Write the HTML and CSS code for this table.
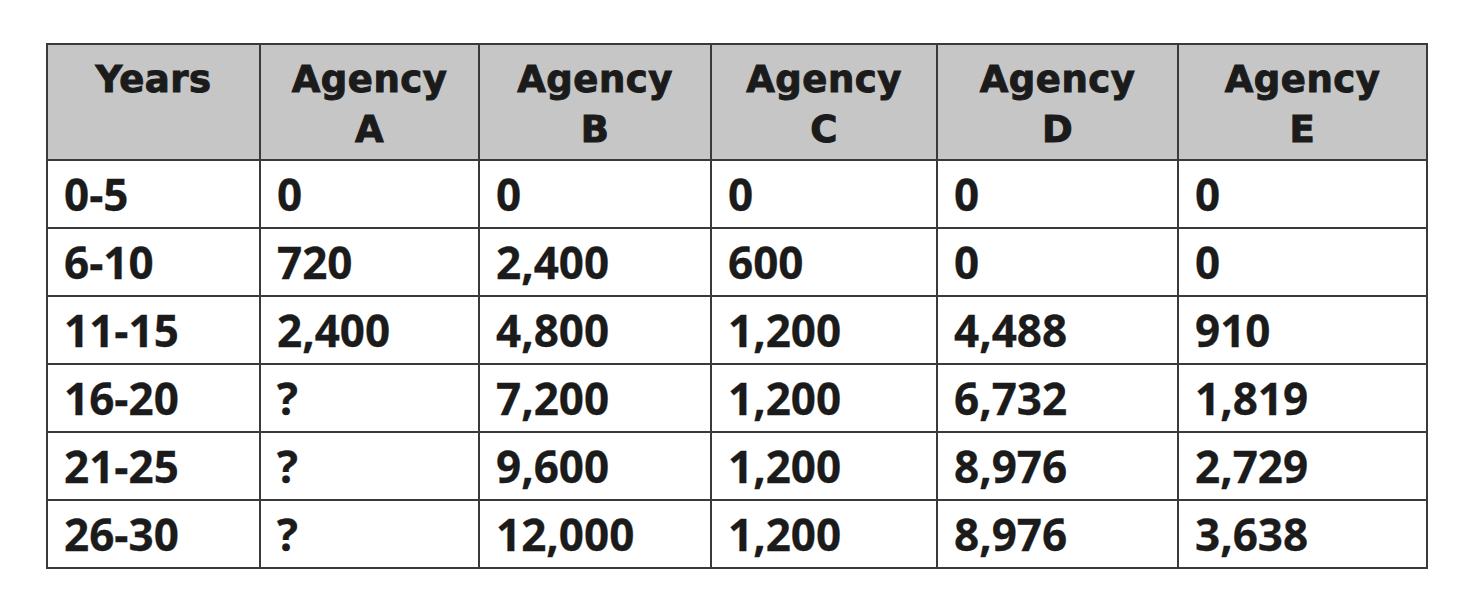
FILE: index.html
```html
<!DOCTYPE html>
<html>
<head>
<meta charset="utf-8">
<link rel="stylesheet" href="styles.css">
</head>
<body>
<table class="data">
  <colgroup>
    <col class="c1"><col class="c2"><col class="c3"><col class="c4"><col class="c5"><col class="c6">
  </colgroup>
  <thead>
    <tr>
      <th>Years</th>
      <th>Agency<br>A</th>
      <th>Agency<br>B</th>
      <th>Agency<br>C</th>
      <th>Agency<br>D</th>
      <th>Agency<br>E</th>
    </tr>
  </thead>
  <tbody>
    <tr><td>0-5</td><td>0</td><td>0</td><td>0</td><td>0</td><td>0</td></tr>
    <tr><td>6-10</td><td>720</td><td>2,400</td><td>600</td><td>0</td><td>0</td></tr>
    <tr><td>11-15</td><td>2,400</td><td>4,800</td><td>1,200</td><td>4,488</td><td>910</td></tr>
    <tr><td>16-20</td><td>?</td><td>7,200</td><td>1,200</td><td>6,732</td><td>1,819</td></tr>
    <tr><td>21-25</td><td>?</td><td>9,600</td><td>1,200</td><td>8,976</td><td>2,729</td></tr>
    <tr><td>26-30</td><td>?</td><td>12,000</td><td>1,200</td><td>8,976</td><td>3,638</td></tr>
  </tbody>
</table>
</body>
</html>
```
FILE: styles.css
```css
html, body {
  margin: 0;
  padding: 0;
  background: #ffffff;
}
body {
  padding: 43px 0 0 46px;
}
.data {
  border-collapse: collapse;
  table-layout: fixed;
  width: 1382px;
  color: #1b1b1b;
}
.c1 { width: 213px; }
.c2 { width: 219px; }
.c3 { width: 232px; }
.c4 { width: 226px; }
.c5 { width: 241px; }
.c6 { width: 249px; }
.data th,
.data td {
  border: 2px solid #3a3a3a;
}
.data th {
  background: #c6c6c6;
  font-family: "DejaVu Sans", sans-serif;
  font-weight: bold;
  font-size: 37px;
  line-height: 50px;
  letter-spacing: 0.5px;
  -webkit-text-stroke: 1px #1b1b1b;
  text-align: center;
  vertical-align: top;
  padding: 10px 0 4px;
}
.data td {
  font-family: "Open Sans", sans-serif;
  font-weight: 700;
  font-size: 44px;
  line-height: 66px;
  height: 66px;
  padding: 0 0 0 16px;
  text-align: left;
  white-space: nowrap;
  -webkit-text-stroke: 0.3px #1b1b1b;
}
```
